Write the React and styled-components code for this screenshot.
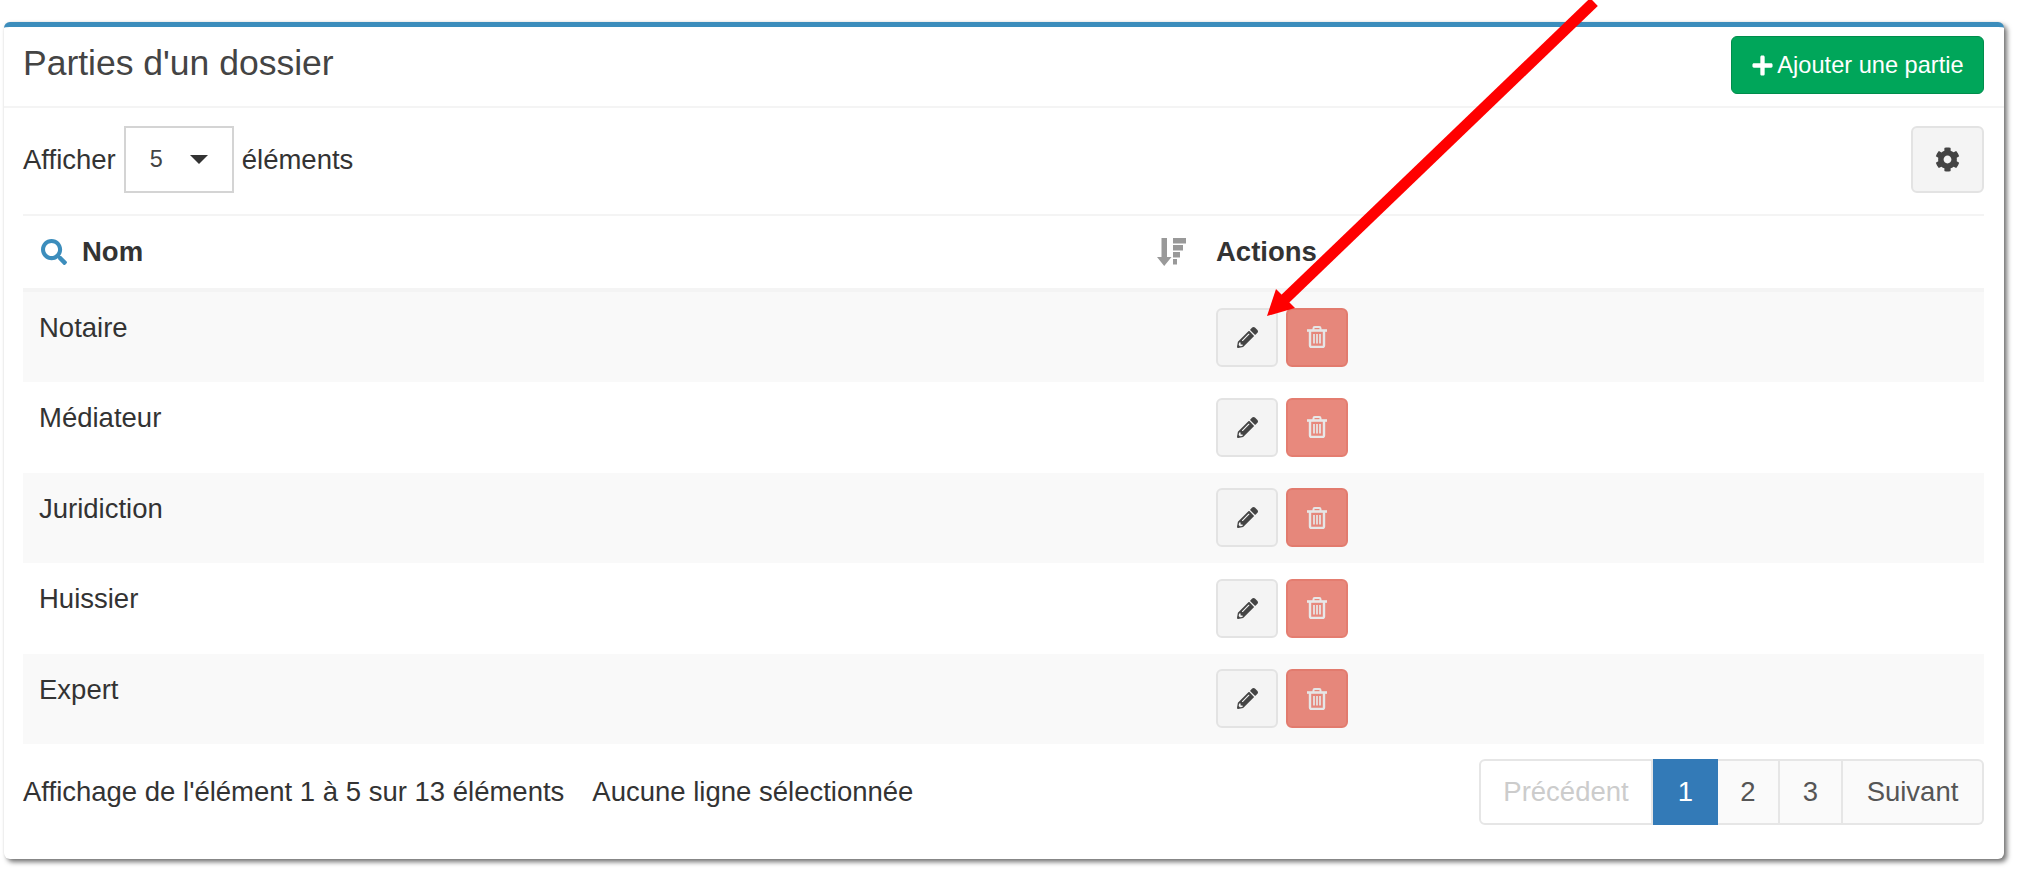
import React from "react";
import styled, { createGlobalStyle } from "styled-components";
import { FaPlus, FaCog, FaSearch, FaPencilAlt } from "react-icons/fa";

const rows = ["Notaire", "Médiateur", "Juridiction", "Huissier", "Expert"];

const GlobalStyle = createGlobalStyle`
  html, body {
    margin: 0;
    background: #fff;
    font-family: "Liberation Sans", Arial, sans-serif;
    color: #333;
  }
`;

const Page = styled.div`
  position: relative;
  box-sizing: border-box;
  width: 2017px;
  height: 872px;
  padding: 22px 13px 13px 4px;
  overflow: hidden;
`;

const Card = styled.section`
  box-sizing: border-box;
  height: 837px;
  background: #fff;
  border-top: 5px solid #3c8dbc;
  border-radius: 6px;
  box-shadow: 3px 3px 5px rgba(0, 0, 0, 0.55), 0 0 2px rgba(0, 0, 0, 0.08);
`;

const Header = styled.header`
  box-sizing: border-box;
  height: 81px;
  padding: 9px 20px 0 19px;
  display: flex;
  justify-content: space-between;
  align-items: flex-start;
  border-bottom: 2px solid #f4f4f4;
`;

const Title = styled.h3`
  margin: 0;
  font-size: 35.5px;
  font-weight: 400;
  line-height: 54px;
  color: #444;
`;

const AddButton = styled.button`
  box-sizing: border-box;
  width: 253px;
  height: 58px;
  padding: 0;
  display: flex;
  align-items: center;
  justify-content: center;
  gap: 3px;
  background: #00a65a;
  border: 1px solid #008d4c;
  border-radius: 6px;
  color: #fff;
  font: 400 23.6px "Liberation Sans", Arial, sans-serif;
`;

const Body = styled.div`
  padding: 0 20px 0 19px;
`;

const Toolbar = styled.div`
  box-sizing: border-box;
  height: 108px;
  padding: 18px 0 0;
  display: flex;
  justify-content: space-between;
  align-items: flex-start;
  border-bottom: 2px solid #f4f4f4;
`;

const LengthControl = styled.label`
  display: flex;
  align-items: center;
  gap: 8px;
  height: 67px;
  font-size: 27.5px;
`;

const SelectBox = styled.div`
  box-sizing: border-box;
  width: 110px;
  height: 67px;
  padding: 0 24px;
  display: flex;
  align-items: center;
  justify-content: space-between;
  border: 2px solid #d4d4d4;
  font-size: 23.4px;
  color: #444;
`;

const Caret = styled.span`
  width: 0;
  height: 0;
  border-left: 9.5px solid transparent;
  border-right: 9.5px solid transparent;
  border-top: 9.5px solid #333;
`;

const GearButton = styled.button`
  box-sizing: border-box;
  width: 73px;
  height: 67px;
  padding: 0;
  display: flex;
  align-items: center;
  justify-content: center;
  background: #f4f4f4;
  border: 2px solid #e3e3e3;
  border-radius: 6px;
  color: #444;
  font-size: 25px;
`;

const Table = styled.table`
  width: 100%;
  border-collapse: separate;
  border-spacing: 0;
  table-layout: fixed;
`;

const NameHead = styled.th`
  box-sizing: border-box;
  width: 1177px;
  height: 76px;
  padding: 0 14px 0 18px;
  border-bottom: 4px solid #f4f4f4;
  text-align: left;
`;

const HeadInner = styled.div`
  display: flex;
  align-items: center;
  font-size: 27.5px;
  font-weight: 700;
  color: #333;
`;

const SearchIcon = styled(FaSearch)`
  width: 26px;
  height: 26px;
  margin-right: 15px;
  color: #3c8dbc;
`;

const SortIconSvg = styled.svg`
  width: 29px;
  height: 28px;
  margin-left: auto;
  fill: #999;
`;

const ActionsHead = styled.th`
  box-sizing: border-box;
  padding: 0 16px;
  border-bottom: 4px solid #f4f4f4;
  text-align: left;
  font-size: 27.5px;
  font-weight: 700;
  color: #333;
`;

const Row = styled.tr`
  background: ${(props) => (props.$odd ? "#f9f9f9" : "#fff")};
`;

const NameCell = styled.td`
  box-sizing: border-box;
  height: 90.4px;
  padding: 15px 16px 0;
  vertical-align: top;
  font-size: 27.5px;
  line-height: 41px;
  color: #333;
`;

const ActionCell = styled.td`
  padding: 15.5px 16px 0;
  vertical-align: top;
`;

const Actions = styled.div`
  display: flex;
  gap: 8px;
`;

const IconButton = styled.button`
  box-sizing: border-box;
  width: 62px;
  height: 59px;
  padding: 0;
  display: flex;
  align-items: center;
  justify-content: center;
  border-radius: 6px;
  font-size: 21px;
  background: ${(props) => (props.$danger ? "#dd4b39" : "#f4f4f4")};
  border: 2px solid ${(props) => (props.$danger ? "#d73925" : "#e3e3e3")};
  color: ${(props) => (props.$danger ? "#ddd" : "#444")};
  opacity: ${(props) => (props.$danger ? 0.65 : 1)};
`;

const TrashSvg = styled.svg`
  width: 20px;
  height: 22px;
`;

const Footer = styled.div`
  margin-top: 15px;
  display: flex;
  align-items: center;
  justify-content: space-between;
`;

const Info = styled.div`
  display: flex;
  gap: 28px;
  font-size: 27.5px;
  color: #333;
`;

const Pager = styled.nav`
  display: flex;
  height: 66px;
`;

const PageLink = styled.a`
  box-sizing: border-box;
  width: ${(props) => props.$width}px;
  display: flex;
  align-items: center;
  justify-content: center;
  font-size: 27.5px;
  border: 2px solid ${(props) => (props.$active ? "#337ab7" : "#e6e6e6")};
  border-left-width: ${(props) => (props.$first || props.$active ? 2 : 0)}px;
  background: ${(props) => (props.$active ? "#337ab7" : props.$first ? "#fff" : "#fafafa")};
  color: ${(props) => (props.$active ? "#fff" : props.$first ? "#ccc" : "#555")};
  border-radius: ${(props) => (props.$first ? "6px 0 0 6px" : props.$last ? "0 6px 6px 0" : "0")};
`;

const ArrowOverlay = styled.svg`
  position: absolute;
  top: 0;
  left: 0;
  pointer-events: none;
`;

const SortIcon = () => (
  <SortIconSvg viewBox="0 0 29 28">
    <polygon points="4.5,0 10,0 10,19 14.5,19 7.2,28 0,19 4.5,19" />
    <rect x="16" y="0" width="13" height="5.5" />
    <rect x="16" y="7" width="10" height="5.5" />
    <rect x="16" y="14" width="7" height="5.5" />
    <rect x="16" y="21" width="4" height="5.5" />
  </SortIconSvg>
);

const TrashIcon = () => (
  <TrashSvg viewBox="0 0 20 22" fill="none" stroke="currentColor" strokeWidth="2.4">
    <path d="M6.5 4V2.2C6.5 1.5 7 1 7.7 1h4.6c.7 0 1.2.5 1.2 1.2V4" strokeWidth="2" />
    <path d="M0 4.5h20" strokeWidth="2.6" />
    <path d="M3 5v14.5c0 1 .6 1.5 1.5 1.5h11c.9 0 1.5-.5 1.5-1.5V5" />
    <path d="M7 8v9.5M10 8v9.5M13 8v9.5" strokeWidth="1.7" />
  </TrashSvg>
);

export default function App() {
  return (
    <Page>
      <GlobalStyle />
      <Card>
        <Header>
          <Title>Parties d'un dossier</Title>
          <AddButton>
            <FaPlus size={23} />
            Ajouter une partie
          </AddButton>
        </Header>
        <Body>
          <Toolbar>
            <LengthControl>
              Afficher
              <SelectBox>
                5
                <Caret />
              </SelectBox>
              éléments
            </LengthControl>
            <GearButton>
              <FaCog />
            </GearButton>
          </Toolbar>
          <Table>
            <thead>
              <tr>
                <NameHead>
                  <HeadInner>
                    <SearchIcon />
                    Nom
                    <SortIcon />
                  </HeadInner>
                </NameHead>
                <ActionsHead>Actions</ActionsHead>
              </tr>
            </thead>
            <tbody>
              {rows.map((name, i) => (
                <Row key={name} $odd={i % 2 === 0}>
                  <NameCell>{name}</NameCell>
                  <ActionCell>
                    <Actions>
                      <IconButton>
                        <FaPencilAlt />
                      </IconButton>
                      <IconButton $danger>
                        <TrashIcon />
                      </IconButton>
                    </Actions>
                  </ActionCell>
                </Row>
              ))}
            </tbody>
          </Table>
          <Footer>
            <Info>
              <span>Affichage de l'élément 1 à 5 sur 13 éléments</span>
              <span>Aucune ligne sélectionnée</span>
            </Info>
            <Pager>
              <PageLink $first $width={174}>Précédent</PageLink>
              <PageLink $active $width={65}>1</PageLink>
              <PageLink $width={62}>2</PageLink>
              <PageLink $width={63}>3</PageLink>
              <PageLink $last $width={141}>Suivant</PageLink>
            </Pager>
          </Footer>
        </Body>
      </Card>
      <ArrowOverlay width="2017" height="872" viewBox="0 0 2017 872">
        <line x1="1285" y1="299" x2="1594" y2="2" stroke="#ff0000" strokeWidth="11" />
        <polygon points="1267,316 1276,289 1295,308" fill="#ff0000" />
      </ArrowOverlay>
    </Page>
  );
}
